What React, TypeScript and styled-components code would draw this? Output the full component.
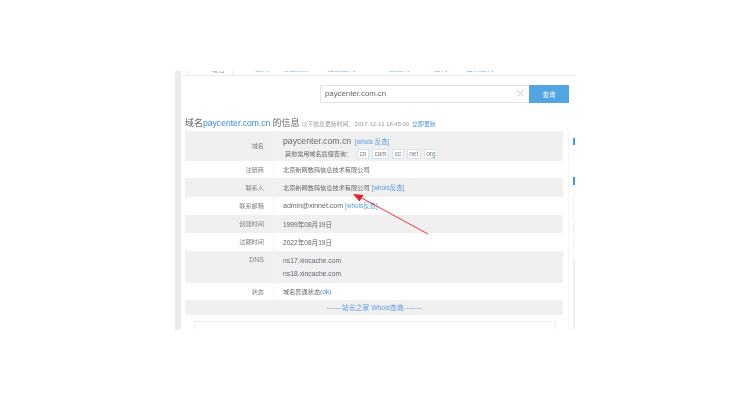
import React from "react";
import styled, { createGlobalStyle } from "styled-components";

const GlobalStyle = createGlobalStyle`
  html, body {
    margin: 0;
    padding: 0;
    background: #fff;
  }
`;

const Page = styled.div`
  width: 750px;
  height: 400px;
  display: flex;
  align-items: center;
  justify-content: center;
  font-family: "Liberation Sans", "Noto Sans CJK SC", sans-serif;
  color: #555;
`;

const Shot = styled.div`
  position: relative;
  width: 400px;
  height: 259px;
  display: flex;
  overflow: hidden;
  background: #fff;
  filter: blur(0.35px);
`;

const Gutter = styled.div`
  width: 6px;
  flex: none;
  background: #ebebeb;
`;

const Main = styled.div`
  flex: 1;
  min-width: 0;
  display: flex;
  flex-direction: column;
`;

const Tabs = styled.div`
  height: 4px;
  flex: none;
  display: flex;
  align-items: flex-end;
  padding-left: 6px;
  border-bottom: 1px solid #e9ecf2;
  overflow: hidden;
`;

const Tab = styled.div<{ $active?: boolean; $w: number; $red?: boolean }>`
  width: ${(p) => p.$w}px;
  height: 14px;
  flex: none;
  box-sizing: border-box;
  padding-left: ${(p) => (p.$active ? "16px" : "0")};
  text-align: center;
  font-size: 7px;
  line-height: 15px;
  white-space: nowrap;
  color: ${(p) => (p.$active ? "#999" : p.$red ? "#e98080" : "#72a9e0")};
  border-left: 1px solid ${(p) => (p.$active ? "#e3e6ec" : "transparent")};
  border-right: 1px solid ${(p) => (p.$active ? "#e3e6ec" : "transparent")};
  margin-bottom: ${(p) => (p.$active ? "-1px" : "0")};
  background: #fff;
`;

const SearchRow = styled.div`
  display: flex;
  justify-content: flex-end;
  margin-top: 9px;
  padding-right: 6px;
`;

const SearchInput = styled.div`
  width: 209px;
  height: 18px;
  box-sizing: border-box;
  border: 1px solid #dfe3ee;
  border-right: none;
  display: flex;
  align-items: center;
  justify-content: space-between;
  padding: 0 5px 0 4px;
  font-size: 7.8px;
  color: #666;
`;

const SearchButton = styled.div`
  width: 40px;
  height: 18px;
  background: #51a5e1;
  color: #fff;
  font-size: 6.5px;
  display: flex;
  align-items: center;
  justify-content: center;
`;

const Content = styled.div`
  display: flex;
  padding-left: 4px;
  margin-top: 15px;
  flex: 1;
  min-height: 0;
`;

const Left = styled.div`
  width: 378px;
  flex: none;
`;

const Heading = styled.div`
  height: 14px;
  margin-bottom: -1px;
  line-height: 11px;
  white-space: nowrap;
  font-size: 9px;
  color: #666;
`;

const HeadingDomain = styled.span`
  color: #3a87d8;
  font-size: 8.6px;
  margin: 0 2px 0 0;
`;

const Meta = styled.span`
  font-size: 5.9px;
  color: #999;
  margin-left: 2px;
`;

const MetaLink = styled.span`
  color: #4a90d9;
  margin-left: 3px;
`;

const Table = styled.div`
  display: flex;
  flex-direction: column;
`;

const Row = styled.div<{ $h: number; $gray?: boolean }>`
  height: ${(p) => p.$h}px;
  display: flex;
  background: ${(p) => (p.$gray ? "#f0f0f0" : "#fff")};
  font-size: 6.2px;
`;

const Label = styled.div<{ $top?: boolean }>`
  width: 89px;
  flex: none;
  box-sizing: border-box;
  padding: ${(p) => (p.$top ? "5px" : "0")} 9px 0 0;
  display: flex;
  align-items: ${(p) => (p.$top ? "flex-start" : "center")};
  justify-content: flex-end;
  color: #808080;
  border-right: 1px solid #f4f4f4;
  font-size: ${(p) => (p.$top ? "7px" : "6.2px")};
`;

const Value = styled.div`
  flex: 1;
  padding-left: 9px;
  display: flex;
  flex-direction: column;
  justify-content: center;
  color: #666;
`;

const Line = styled.div`
  white-space: nowrap;
`;

const Latin = styled.span`
  font-size: 7px;
`;

const DateText = styled.span`
  font-size: 6.6px;
`;

const BigValue = styled.div`
  font-size: 8.7px;
  line-height: 11px;
  margin-top: 3px;
  color: #666;
`;

const WhoisLink = styled.span`
  color: #5b9bdc;
  font-size: 6.4px;
  margin-left: 2px;
`;

const OkLink = styled.span`
  color: #4a90d9;
  font-size: 7px;
`;

const SuffixRow = styled.div`
  display: flex;
  align-items: center;
  gap: 3px;
  margin-top: 2px;
  padding-left: 2px;
  font-size: 6.1px;
`;

const SuffixLabel = styled.span`
  margin-right: 2px;
`;

const Suffix = styled.span`
  height: 8px;
  line-height: 8px;
  padding: 0 1.5px;
  border: 1px solid #d5e3f0;
  background: #fff;
  color: #777;
  font-size: 6.5px;
`;

const DnsLine = styled.div`
  height: 13px;
  line-height: 13px;
  font-size: 6.8px;
  color: #667;
`;

const Banner = styled.div`
  height: 15px;
  line-height: 15px;
  background: #f0f0f0;
  text-align: center;
  color: #5b9bdc;
  font-size: 6.8px;
`;

const DottedBox = styled.div`
  margin: 6px 0 0 9px;
  width: 360px;
  height: 20px;
  border: 1px dotted #e2e2e2;
  border-bottom: none;
`;

const Side = styled.div`
  flex: 1;
  min-width: 0;
  margin: 14px 0 0 5px;
  padding: 6px 0 0 4px;
  border-left: 1px solid #f5f5f5;
  display: flex;
  flex-direction: column;
  align-items: flex-start;
`;

const SideMark = styled.div<{ $gap: number }>`
  width: 2px;
  height: 8px;
  background: #3d9be9;
  margin-bottom: ${(p) => p.$gap}px;
`;

const SideChip = styled.div`
  width: 2px;
  height: 9px;
  background: #fff;
  border: 1px solid #eee;
  border-right: none;
  margin-bottom: 3px;
`;

const SideBlock = styled.div`
  width: 2px;
  height: 72px;
  margin-top: 7px;
  background: #eeeeee;
`;

const ArrowOverlay = styled.svg`
  position: absolute;
  left: 170px;
  top: 115px;
`;

const rows = [
  { label: "注册商", h: 17, gray: false, text: "北京新网数码信息技术有限公司" },
  { label: "联系人", h: 19, gray: true, text: "北京新网数码信息技术有限公司", link: "[whois反查]" },
  { label: "联系邮箱", h: 18, gray: false, latin: "admin@xinnet.com", link: "[whois反查]" },
  { label: "创建时间", h: 18, gray: true, date: "1999年08月19日" },
  { label: "过期时间", h: 18, gray: false, date: "2022年08月19日" },
];

const tabs = [
  { name: "域名", w: 46, active: true },
  { name: "whois查询", w: 40 },
  { name: "域名历史", w: 44 },
  { name: "注册查询", w: 49 },
  { name: "whois反查询", w: 49 },
  { name: "IP查询", w: 45, red: true },
  { name: "备案查询", w: 40 },
];

export default function App() {
  return (
    <Page>
      <GlobalStyle />
      <Shot>
        <Gutter />
        <Main>
          <Tabs>
            {tabs.map((t) => (
              <Tab key={t.name} $w={t.w} $active={t.active} $red={t.red}>
                {t.name}
              </Tab>
            ))}
          </Tabs>
          <SearchRow>
            <SearchInput>
              paycenter.com.cn
              <svg width="7" height="7" viewBox="0 0 7 7">
                <path d="M0.5 0.5L6.5 6.5M6.5 0.5L0.5 6.5" stroke="#c8c8c8" strokeWidth="1" />
              </svg>
            </SearchInput>
            <SearchButton>查询</SearchButton>
          </SearchRow>
          <Content>
            <Left>
              <Heading>
                域名<HeadingDomain>paycenter.com.cn</HeadingDomain>的信息
                <Meta>
                  以下信息更新时间：2017-12-12 18:45:00
                  <MetaLink>立即更新</MetaLink>
                </Meta>
              </Heading>
              <Table>
                <Row $h={30} $gray>
                  <Label>域名</Label>
                  <Value>
                    <BigValue>
                      paycenter.com.cn<WhoisLink> [whois 反查]</WhoisLink>
                    </BigValue>
                    <SuffixRow>
                      <SuffixLabel>其他常用域名后缀查询：</SuffixLabel>
                      {["cn", "com", "cc", "net", "org"].map((s) => (
                        <Suffix key={s}>{s}</Suffix>
                      ))}
                    </SuffixRow>
                  </Value>
                </Row>
                {rows.map((r) => (
                  <Row key={r.label} $h={r.h} $gray={r.gray}>
                    <Label>{r.label}</Label>
                    <Value>
                      <Line>
                        {r.text}
                        {r.latin && <Latin>{r.latin}</Latin>}
                        {r.date && <DateText>{r.date}</DateText>}
                        {r.link && <WhoisLink>{r.link}</WhoisLink>}
                      </Line>
                    </Value>
                  </Row>
                ))}
                <Row $h={32} $gray>
                  <Label $top>DNS</Label>
                  <Value>
                    <DnsLine>ns17.xincache.com</DnsLine>
                    <DnsLine>ns18.xincache.com</DnsLine>
                  </Value>
                </Row>
                <Row $h={17}>
                  <Label>状态</Label>
                  <Value>
                    <Line>
                      域名普通状态(<OkLink>ok</OkLink>)
                    </Line>
                  </Value>
                </Row>
                <Banner>-------站长之家 Whois查询--------</Banner>
              </Table>
              <DottedBox />
            </Left>
            <Side>
              <SideMark $gap={32} />
              <SideMark $gap={11} />
              <SideChip />
              <SideChip />
              <SideChip />
              <SideChip />
              <SideBlock />
            </Side>
          </Content>
        </Main>
        <ArrowOverlay width="100" height="60" viewBox="0 0 100 60">
          <path d="M83 48L14 10.5" stroke="#e8202a" strokeWidth="0.9" fill="none" />
          <path d="M8 8L18.5 9L14.5 15.5Z" fill="#e8202a" />
        </ArrowOverlay>
      </Shot>
    </Page>
  );
}
